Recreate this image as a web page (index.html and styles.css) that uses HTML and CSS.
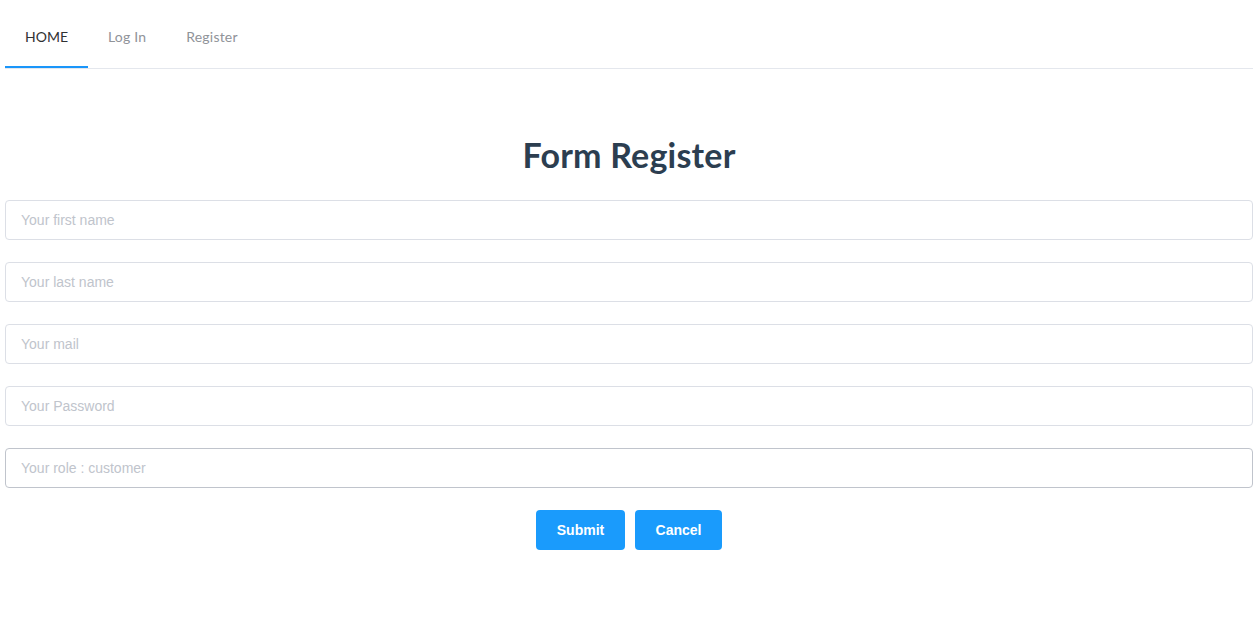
FILE: index.html
```html
<!DOCTYPE html>
<html>
<head>
<meta charset="utf-8">
<link rel="stylesheet" href="styles.css">
</head>
<body>
<div class="page">
  <nav class="tabs">
    <a class="tab active">HOME</a>
    <a class="tab">Log In</a>
    <a class="tab">Register</a>
  </nav>
  <h1 class="title">Form Register</h1>
  <form class="form">
    <input class="field" placeholder="Your first name">
    <input class="field" placeholder="Your last name">
    <input class="field" placeholder="Your mail">
    <input class="field" type="password" placeholder="Your Password">
    <input class="field field-hover" placeholder="Your role : customer">
    <div class="actions">
      <button type="button" class="btn btn-submit">Submit</button>
      <button type="button" class="btn btn-cancel">Cancel</button>
    </div>
  </form>
</div>
</body>
</html>
```
FILE: styles.css
```css
* { box-sizing: border-box; }
html, body { margin: 0; padding: 0; background: #fff; }
.page { padding: 0 5px; }
.tabs {
  display: flex;
  height: 69px;
  border-bottom: 1px solid #e4e7ed;
  font-family: Lato, "Open Sans", sans-serif;
  font-size: 14px;
}
.tab {
  display: flex;
  align-items: center;
  padding: 6px 20px 2px;
  color: #909399;
  height: 68px;
  letter-spacing: 0.2px;
  cursor: pointer;
}
.tab.active {
  color: #303133;
  border-bottom: 2px solid #1a96fa;
  padding-bottom: 0;
  letter-spacing: 0;
}
.title {
  margin: 66px 0 25px;
  text-align: center;
  font-family: Lato, sans-serif;
  font-weight: 700;
  font-size: 34px;
  line-height: 40px;
  letter-spacing: 0.2px;
  color: #2c3e50;
}
.form {
  display: flex;
  flex-direction: column;
  gap: 22px;
}
.field {
  display: block;
  width: 100%;
  height: 40px;
  border: 1px solid #dcdfe6;
  border-radius: 4px;
  padding: 0 15px;
  font-family: "Liberation Sans", Arial, sans-serif;
  font-size: 14px;
  color: #606266;
  outline: none;
}
.field::placeholder { color: #c0c4cc; }
.field-hover { border-color: #c0c4cc; }
.actions {
  display: flex;
  justify-content: center;
  gap: 10px;
}
.btn {
  height: 40px;
  border: none;
  border-radius: 4px;
  background: #1a9bfc;
  color: #fff;
  font-family: "Liberation Sans", Arial, sans-serif;
  font-weight: 700;
  font-size: 14px;
  padding: 0;
  cursor: pointer;
}
.btn-submit { width: 89px; }
.btn-cancel { width: 87px; }
```
